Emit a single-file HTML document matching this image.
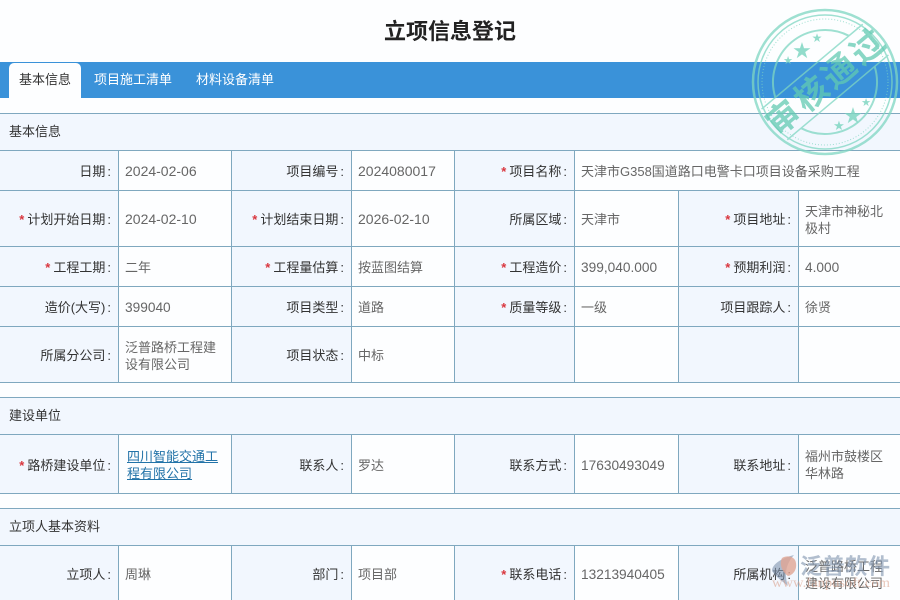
<!DOCTYPE html>
<html><head><meta charset="utf-8"><style>
html{margin:0;padding:0;width:900px;height:600px;overflow:hidden;background:#fdfeff}
body{margin:0;padding:0;background:#fdfeff}
#p{width:900px;height:600px;position:relative;overflow:hidden;font:13px/17px "Liberation Sans","Noto Sans CJK SC",sans-serif;color:#333}
.title{position:absolute;left:0;top:16px;width:900px;text-align:center;font-size:22px;line-height:32px;font-weight:bold;color:#222}
.bar{position:absolute;left:0;top:62px;width:900px;height:36px;background:#3a92d9}
.tab{position:absolute;top:1px;height:35px;line-height:34px;color:#fff;font-size:13px}
.tab.on{left:9px;width:72px;background:#fdfeff;color:#333;text-align:center;border-radius:5px 5px 0 0}
.sec{position:absolute;left:0;width:891px;height:36px;line-height:35px;background:#f2f7fe;border-top:1px solid #7fa8bf;border-bottom:1px solid #7fa8bf;padding-left:9px}
.c{position:absolute;display:flex;align-items:center;box-sizing:border-box;padding-top:2px;border-bottom:1px solid #7fa8bf;border-right:1px solid #7fa8bf}
.l{background:#f2f7fe;justify-content:flex-end;padding-right:7px;color:#333;white-space:nowrap}
.v{background:#fdfeff;padding-left:6px;padding-right:6px;color:#666}
.l i{color:#d9363e;font-style:normal;font-weight:bold;margin-right:3px;font-size:13px}
.l u{text-decoration:none;margin-left:2px}
.n{font-size:14px}.m{font-size:13.7px}
a{color:#2273a8;text-decoration:underline}
.x0{left:0;width:119px}.x1{left:119px;width:113px}.x2{left:232px;width:120px}.x3{left:352px;width:103px}
.x4{left:455px;width:120px}.x5{left:575px;width:104px}.x6{left:679px;width:120px}.x7{left:799px;width:101px;border-right:0}
.r1{top:151px;height:40px}.r2{top:191px;height:56px}.r3{top:247px;height:40px}.r4{top:287px;height:40px}.r5{top:327px;height:56px}
.r6{top:435px;height:59px}.r7{top:546px;height:56px}
svg{position:absolute}
</style></head><body><div id="p">
<div class="title">立项信息登记</div>
<div class="bar">
<div class="tab on">基本信息</div>
<div class="tab" style="left:94px">项目施工清单</div>
<div class="tab" style="left:196px">材料设备清单</div>
</div>

<div class="sec" style="top:113px">基本信息</div>
<div class="c l x0 r1">日期<u>:</u></div><div class="c v x1 r1"><span class="n">2024-02-06</span></div>
<div class="c l x2 r1">项目编号<u>:</u></div><div class="c v x3 r1"><span class="n">2024080017</span></div>
<div class="c l x4 r1"><i>*</i>项目名称<u>:</u></div><div class="c v r1" style="left:575px;width:325px;border-right:0">天津市G358国道路口电警卡口项目设备采购工程</div>

<div class="c l x0 r2"><i>*</i>计划开始日期<u>:</u></div><div class="c v x1 r2"><span class="n">2024-02-10</span></div>
<div class="c l x2 r2"><i>*</i>计划结束日期<u>:</u></div><div class="c v x3 r2"><span class="n">2026-02-10</span></div>
<div class="c l x4 r2">所属区域<u>:</u></div><div class="c v x5 r2">天津市</div>
<div class="c l x6 r2"><i>*</i>项目地址<u>:</u></div><div class="c v x7 r2">天津市神秘北极村</div>

<div class="c l x0 r3"><i>*</i>工程工期<u>:</u></div><div class="c v x1 r3">二年</div>
<div class="c l x2 r3"><i>*</i>工程量估算<u>:</u></div><div class="c v x3 r3">按蓝图结算</div>
<div class="c l x4 r3"><i>*</i>工程造价<u>:</u></div><div class="c v x5 r3"><span class="m">399,040.000</span></div>
<div class="c l x6 r3"><i>*</i>预期利润<u>:</u></div><div class="c v x7 r3"><span class="m">4.000</span></div>

<div class="c l x0 r4">造价(大写)<u>:</u></div><div class="c v x1 r4"><span class="m">399040</span></div>
<div class="c l x2 r4">项目类型<u>:</u></div><div class="c v x3 r4">道路</div>
<div class="c l x4 r4"><i>*</i>质量等级<u>:</u></div><div class="c v x5 r4">一级</div>
<div class="c l x6 r4">项目跟踪人<u>:</u></div><div class="c v x7 r4">徐贤</div>

<div class="c l x0 r5">所属分公司<u>:</u></div><div class="c v x1 r5">泛普路桥工程建设有限公司</div>
<div class="c l x2 r5">项目状态<u>:</u></div><div class="c v x3 r5">中标</div>
<div class="c l x4 r5"></div><div class="c v x5 r5"></div>
<div class="c l x6 r5"></div><div class="c v x7 r5"></div>

<div class="sec" style="top:397px">建设单位</div>
<div class="c l x0 r6"><i>*</i>路桥建设单位<u>:</u></div><div class="c v x1 r6" style="padding-right:4px;padding-left:8px"><a>四川智能交通工程有限公司</a></div>
<div class="c l x2 r6">联系人<u>:</u></div><div class="c v x3 r6">罗达</div>
<div class="c l x4 r6">联系方式<u>:</u></div><div class="c v x5 r6"><span class="m">17630493049</span></div>
<div class="c l x6 r6">联系地址<u>:</u></div><div class="c v x7 r6">福州市鼓楼区华林路</div>

<div class="sec" style="top:508px">立项人基本资料</div>
<div class="c l x0 r7">立项人<u>:</u></div><div class="c v x1 r7">周琳</div>
<div class="c l x2 r7">部门<u>:</u></div><div class="c v x3 r7">项目部</div>
<div class="c l x4 r7"><i>*</i>联系电话<u>:</u></div><div class="c v x5 r7"><span class="m">13213940405</span></div>
<div class="c l x6 r7">所属机构<u>:</u></div><div class="c v x7 r7">泛普路桥工程建设有限公司</div>

<svg style="left:740px;top:0" width="160" height="160" viewBox="0 0 160 160" fill="none">
<g stroke="#7fd6c2" opacity=".75">
<circle cx="85" cy="82" r="72" stroke-width="2.5"/>
<circle cx="85" cy="82" r="67" stroke-width="1.5"/>
<circle cx="85" cy="82" r="63" stroke-width="1" stroke-dasharray="1 2"/>
<g transform="rotate(-40 85 82)">
<path d="M37 62A52 52 0 0 1 133 62M37 102A52 52 0 0 0 133 102" stroke-width="2"/>
<line x1="19" y1="62" x2="151" y2="62" stroke-width="1.5"/>
<line x1="19" y1="102" x2="151" y2="102" stroke-width="1.5"/>
</g>
</g>
<g transform="rotate(-40 85 82)" font-family="Liberation Sans,Noto Sans CJK SC,sans-serif" font-size="33" font-weight="bold" fill="#62c9b2" fill-opacity=".75" text-anchor="middle">
<text x="30" y="94">审</text>
<text x="67" y="94">核</text>
<text x="103" y="94">通</text>
<text x="140" y="94">过</text>
</g>
<g fill="#7fd6c2" fill-opacity=".85" font-family="DejaVu Sans,sans-serif" text-anchor="middle">
<text x="62" y="58" font-size="22">★</text>
<text x="77" y="42" font-size="12">★</text>
<text x="48" y="64" font-size="11">★</text>
<text x="113" y="123" font-size="22">★</text>
<text x="99" y="130" font-size="13">★</text>
<text x="126" y="106" font-size="11">★</text>
</g>
</svg>

<svg style="left:770px;top:550px" width="130" height="50" viewBox="0 0 130 50" fill="none">
<path d="M24 5C12 8 2 14 2 21c4 6 10 10 16 15-3-9-4-20 6-31z" fill="#7f93ad" opacity=".6"/>
<path d="M12 8c5-3 13-2 14 5s-3 12-8 13c-6-4-9-12-6-18z" fill="#e0a593" opacity=".8"/>
<text x="30" y="24" font-family="Liberation Sans,Noto Sans CJK SC,sans-serif" font-size="22" font-weight="bold" fill="#7f93ad" fill-opacity=".6" textLength="90">泛普软件</text>
<text x="2" y="37" font-family="Liberation Serif,serif" font-size="14" fill="#d99a84" fill-opacity=".55" textLength="118" lengthAdjust="spacingAndGlyphs">www.fanpusoft.com</text>
</svg>
</div></body></html>
